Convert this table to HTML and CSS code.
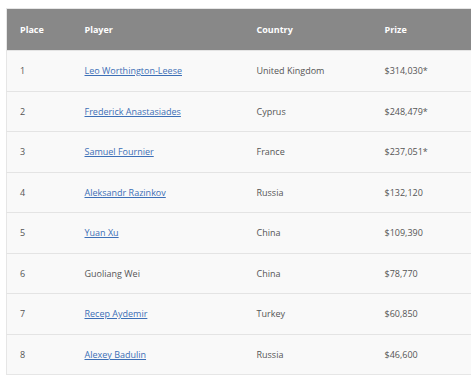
FILE: index.html
```html
<!DOCTYPE html>
<html>
<head>
<meta charset="utf-8">
<link rel="stylesheet" href="styles.css">
</head>
<body>
<table class="results">
  <thead>
    <tr><th class="c-place">Place</th><th class="c-player">Player</th><th class="c-country">Country</th><th class="c-prize">Prize</th></tr>
  </thead>
  <tbody>
    <tr><td>1</td><td><a href="#">Leo Worthington-Leese</a></td><td>United Kingdom</td><td>$314,030*</td></tr>
    <tr><td>2</td><td><a href="#">Frederick Anastasiades</a></td><td>Cyprus</td><td>$248,479*</td></tr>
    <tr><td>3</td><td><a href="#">Samuel Fournier</a></td><td>France</td><td>$237,051*</td></tr>
    <tr><td>4</td><td><a href="#">Aleksandr Razinkov</a></td><td>Russia</td><td>$132,120</td></tr>
    <tr><td>5</td><td><a href="#">Yuan Xu</a></td><td>China</td><td>$109,390</td></tr>
    <tr><td>6</td><td>Guoliang Wei</td><td>China</td><td>$78,770</td></tr>
    <tr><td>7</td><td><a href="#">Recep Aydemir</a></td><td>Turkey</td><td>$60,850</td></tr>
    <tr><td>8</td><td><a href="#">Alexey Badulin</a></td><td>Russia</td><td>$46,600</td></tr>
  </tbody>
</table>
</body>
</html>
```
FILE: styles.css
```css
html, body {
  background: #ffffff;
}
body {
  margin: 8px 5px 0 6px;
  font-family: "Open Sans", "Liberation Sans", sans-serif;
  font-size: 9px;
  color: #555555;
}
.results {
  width: 465px;
  border-collapse: collapse;
  table-layout: fixed;
  border: 1px solid #e6e6e6;
}
.results th {
  background: #888888;
  color: #ffffff;
  font-weight: 700;
  text-align: left;
  height: 42px;
  padding: 0 0 0 13px;
  box-sizing: border-box;
}
.c-place { width: 65px; }
.c-player { width: 172px; }
.c-country { width: 128px; }
.c-prize { width: 100px; }
.results td {
  background: #f9f9f9;
  height: 40.5px;
  padding: 0 0 0 13px;
  border-top: 1px solid #e4e4e4;
  box-sizing: border-box;
}
.results a {
  color: #3d6fb6;
  text-decoration: underline;
}
```
